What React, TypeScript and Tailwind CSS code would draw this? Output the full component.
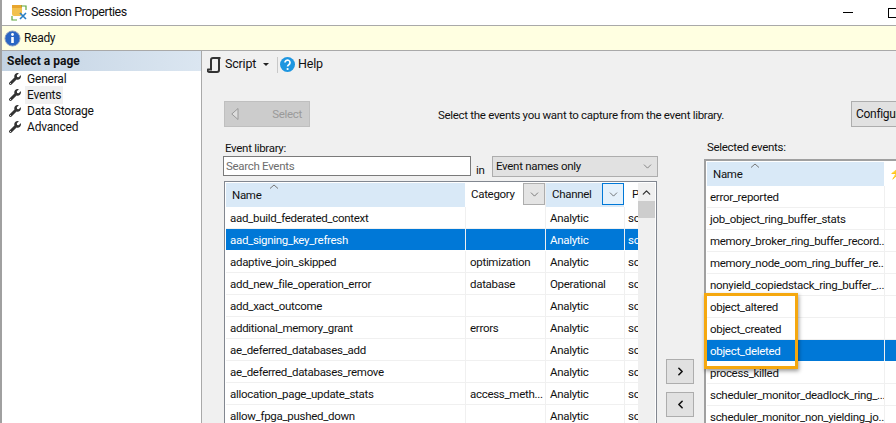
import { FaWrench } from "react-icons/fa";
import { ChevronDown, ChevronUp, ChevronLeft, ChevronRight } from "lucide-react";

const lib: [string, string, string][] = [
  ["aad_build_federated_context", "", "Analytic"],
  ["aad_signing_key_refresh", "", "Analytic"],
  ["adaptive_join_skipped", "optimization", "Analytic"],
  ["add_new_file_operation_error", "database", "Operational"],
  ["add_xact_outcome", "", "Analytic"],
  ["additional_memory_grant", "errors", "Analytic"],
  ["ae_deferred_databases_add", "", "Analytic"],
  ["ae_deferred_databases_remove", "", "Analytic"],
  ["allocation_page_update_stats", "access_meth...", "Analytic"],
  ["allow_fpga_pushed_down", "", "Analytic"],
];
const sel = [
  "error_reported",
  "job_object_ring_buffer_stats",
  "memory_broker_ring_buffer_record...",
  "memory_node_oom_ring_buffer_re...",
  "nonyield_copiedstack_ring_buffer_...",
  "object_altered",
  "object_created",
  "object_deleted",
  "process_killed",
  "scheduler_monitor_deadlock_ring_...",
  "scheduler_monitor_non_yielding_jo...",
];
const pages = ["General", "Events", "Data Storage", "Advanced"];

function SortCaret() {
  return (
    <svg width="10" height="5" viewBox="0 0 10 5" className="absolute left-[43px] top-[1px]">
      <path d="M1 4.5 L5 1 L9 4.5" fill="none" stroke="#777" strokeWidth="1" />
    </svg>
  );
}

export default function App() {
  return (
    <div className="w-[896px] h-[423px] overflow-hidden flex flex-col bg-[#f0f0f0] border-l-2 border-[#a0a0a0] text-[11.5px] text-[#111] font-['Roboto',sans-serif] tracking-[-0.3px]">
      <div className="h-[25px] shrink-0 bg-white flex items-center pl-[8px]">
        <svg width="18" height="18" viewBox="0 0 18 18">
          <rect x="2" y="1" width="10" height="11" rx="2" fill="#f2c14e" />
          <rect x="2" y="1" width="10" height="3" fill="#e8a52e" />
          <path d="M11 2h5v4M2 12v4h5" fill="none" stroke="#5fa83c" strokeWidth="1.2" />
          <path d="M10 9l6 6M16 9l-6 6" stroke="#2a7fc4" strokeWidth="1.6" />
        </svg>
        <span className="ml-[3px] text-[12.5px] tracking-[-0.5px]">Session Properties</span>
        <div className="ml-auto flex items-center mr-[-3px]">
          <div className="w-[10px] h-px bg-black" />
          <div className="ml-[35px] w-[11px] h-[10px] border border-black" />
        </div>
      </div>
      <div className="h-[26px] shrink-0 bg-[#ffffe1] border-y border-[#a9a9a9] flex items-center pl-[2px]">
        <svg width="17" height="17" viewBox="0 0 17 17">
          <circle cx="8.5" cy="8.5" r="7.5" fill="#2a66c4" stroke="#8a9cc0" />
          <circle cx="8.5" cy="4.5" r="1.4" fill="#fff" />
          <rect x="7.2" y="7" width="2.6" height="6" fill="#fff" />
        </svg>
        <span className="ml-[3px] text-[12px]">Ready</span>
      </div>
      <div className="flex-1 flex min-h-0">
        <div className="w-[200px] shrink-0 bg-white border-r border-[#a9a9a9]">
          <div className="h-[20px] bg-gradient-to-r from-[#c3d3e3] to-[#dbe6f1] pl-[5px] text-[12px] font-bold leading-[20px] tracking-[0px]">Select a page</div>
          <div className="pl-[7px]">
            {pages.map((p) => (
              <div key={p} className="h-[16px] flex items-center">
                <FaWrench className="w-[12px] h-[12px] text-[#333]" />
                <span className={`ml-[4px] px-[2px] text-[12px] tracking-[-0.2px] ${p === "Events" ? "bg-[#f0f0f0]" : ""}`}>{p}</span>
              </div>
            ))}
          </div>
        </div>
        <div className="flex-1 min-w-0 flex flex-col">
          <div className="h-[27px] shrink-0 flex items-center pl-[5px]">
            <svg width="14" height="16" viewBox="0 0 14 16">
              <path d="M4 3a2 2 0 0 1 2-2h7.5M10.5 1a1.5 1.5 0 0 1 1.5 1.5V13a2 2 0 0 1-2 2H2a1.5 1.5 0 0 1-1-2.5h3V3" fill="none" stroke="#333" strokeWidth="2" />
            </svg>
            <span className="ml-[4px] text-[12.5px] tracking-[-0.2px] w-[32px]">Script</span>
            <svg width="6" height="3" viewBox="0 0 6 3" className="ml-[6px]"><path d="M0 0h6L3 3z" fill="#222" /></svg>
            <div className="ml-[8px] w-px h-[16px] bg-[#c8c8c8]" />
            <svg width="15" height="15" viewBox="0 0 15 15" className="ml-[2px]">
              <circle cx="7.5" cy="7.5" r="7.5" fill="#1e96e0" />
              <path d="M5 5.6a2.5 2.5 0 1 1 3.8 2.1c-.8.5-1.2.9-1.2 1.8" fill="none" stroke="#fff" strokeWidth="1.7" />
              <circle cx="7.6" cy="12" r="1.1" fill="#fff" />
            </svg>
            <span className="ml-[3px] text-[12.5px] tracking-[-0.2px]">Help</span>
          </div>
          <div className="flex-1 min-h-0 relative pl-[22px]">
            <div className="pt-[23px] h-[66px] flex">
              <div className="w-[86px] h-[26px] bg-[#cccccc] border border-[#bfbfbf] flex items-center pl-[6px]">
                <svg width="8" height="12" viewBox="0 0 8 12"><path d="M7 .5v11L.8 6z" fill="#ddd" stroke="#999" /></svg>
                <span className="ml-auto mr-[7px] pt-[1px] text-[#9a9a9a]">Select</span>
              </div>
              <div className="ml-[128px] h-[26px] leading-[29px]">Select the events you want to capture from the event library.</div>
              <div className="absolute left-[649px] top-[23px] w-[60px] h-[26px] bg-[#e1e1e1] border border-[#adadad] pl-[4px] leading-[25px] text-[12px]">Configure</div>
            </div>
            <div className="flex">
              <div className="w-[433px] shrink-0 flex flex-col">
                <div className="h-[12px] leading-[10px] -mt-[1px] pl-[1px]">Event library:</div>
                <div className="flex items-start h-[25px] mt-[1px] -ml-[1px]">
                  <div className="w-[248px] shrink-0 h-[20px] bg-white border border-[#7a7a7a] pl-[2px] leading-[19px] text-[#6d6d6d]">Search Events</div>
                  <span className="w-[21px] shrink-0 pl-[5px] mt-[6px]">in</span>
                  <div className="w-[166px] shrink-0 h-[21px] bg-[#e1e1e1] border border-[#adadad] flex items-center pl-[3px]">
                    Event names only
                    <ChevronDown className="ml-auto mr-[3px] w-[13px] h-[13px] text-[#555]" strokeWidth={1.2} />
                  </div>
                </div>
                <div className="w-[433px] h-[300px] bg-white border border-[#828790] pt-[1px] pl-[1px] flex overflow-hidden">
                  <div className="w-[412px] shrink-0 overflow-hidden">
                    <div className="h-[24px] flex">
                      <div className="relative w-[240px] shrink-0 bg-[#d9e9f7] border-r border-white pl-[6px] leading-[25px]"><SortCaret />Name</div>
                      <div className="w-[80px] shrink-0 bg-white border-r border-[#eee] pl-[5px] flex items-center relative">
                        Category
                        <div className="absolute right-0 top-0 h-[22px] w-[22px] bg-[#e4e4e4] border border-[#adadad] flex items-center justify-center"><ChevronDown className="w-[13px] h-[13px] text-[#444]" strokeWidth={1.2} /></div>
                      </div>
                      <div className="w-[79px] shrink-0 bg-[#d9e9f7] border-r border-white pl-[6px] flex items-center relative">
                        Channel
                        <div className="absolute right-0 top-0 h-[22px] w-[22px] bg-[#e5f1fb] border border-[#0078d7] flex items-center justify-center"><ChevronDown className="w-[13px] h-[13px] text-[#333]" strokeWidth={1.2} /></div>
                      </div>
                      <div className="flex-1 pl-[7px] flex items-center">P</div>
                    </div>
                    {lib.map(([n, c, ch], i) => (
                      <div key={n} className={`h-[22px] flex leading-[23px] border-b ${i === 1 ? "bg-[#0078d7] text-white border-white" : "border-[#f0f0f0]"}`}>
                        <div className="w-[240px] shrink-0 pl-[4px] border-r border-[#f0f0f0]">{n}</div>
                        <div className="w-[80px] shrink-0 pl-[4px] border-r border-[#f0f0f0]">{c}</div>
                        <div className="w-[79px] shrink-0 pl-[4px] border-r border-[#f0f0f0]">{ch}</div>
                        <div className="flex-1 pl-[3px] overflow-hidden">so</div>
                      </div>
                    ))}
                  </div>
                  <div className="w-[17px] shrink-0 bg-[#f0f0f0] pt-[3px] flex flex-col items-center">
                    <ChevronUp className="w-[13px] h-[13px] text-[#333]" strokeWidth={2.4} />
                    <div className="mt-[2px] w-full h-[17px] bg-[#cdcdcd]" />
                  </div>
                </div>
              </div>
              <div className="w-[47px] shrink-0 pl-[9px] pt-[215px] flex flex-col gap-[8px]">
                <div className="w-[28px] h-[25px] shrink-0 bg-[#e1e1e1] border border-[#adadad] flex items-center justify-center"><ChevronRight className="w-[13px] h-[13px]" strokeWidth={3} /></div>
                <div className="w-[28px] h-[25px] shrink-0 bg-[#e1e1e1] border border-[#adadad] flex items-center justify-center"><ChevronLeft className="w-[13px] h-[13px]" strokeWidth={3} /></div>
              </div>
              <div className="flex-1 min-w-0 flex flex-col">
                <div className="h-[12px] leading-[8px] -mt-[1px] pl-[3px]">Selected events:</div>
                <div className="w-[230px] h-[300px] bg-white border-2 border-r-0 border-[#a0a0a0] mt-[4px] pl-[1px] pt-[1px] overflow-hidden">
                  <div className="h-[24px] flex">
                    <div className="relative w-[178px] shrink-0 bg-[#d9e9f7] border-r border-white pl-[6px] leading-[25px]"><SortCaret />Name</div>
                    <div className="flex-1 pl-[4px] flex items-center text-[#e0a020]">⚡</div>
                  </div>
                  {sel.map((n) => (
                    <div key={n} className={`h-[22px] flex leading-[23px] border-b ${n === "object_deleted" ? "bg-[#0078d7] text-white border-white" : "border-[#f0f0f0]"}`}>
                      <div className="w-[178px] shrink-0 pl-[3px] border-r border-[#f0f0f0] whitespace-nowrap overflow-hidden">{n}</div>
                    </div>
                  ))}
                </div>
              </div>
            </div>
            <div className="absolute left-[502px] top-[215px] w-[94px] h-[76px] border-[3px] border-[#f5a80f] shadow-[1px_2px_4px_rgba(0,0,0,0.4)]" />
          </div>
        </div>
      </div>
    </div>
  );
}
